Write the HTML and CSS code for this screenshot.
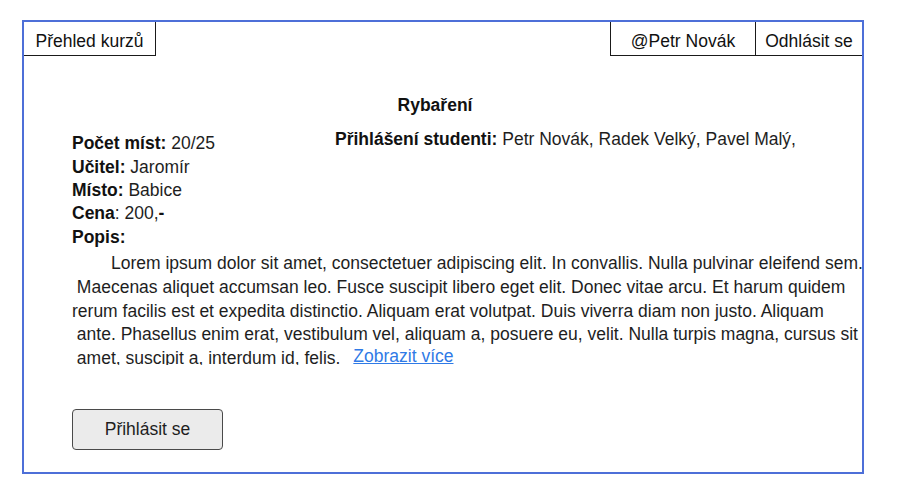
FILE: index.html
```html
<!DOCTYPE html>
<html lang="cs">
<head>
<meta charset="utf-8">
<title>Rybaření</title>
<link rel="stylesheet" href="styles.css">
</head>
<body>
<div class="frame">
  <div class="topbar">
    <div class="tab tab-courses">Přehled kurzů</div>
    <div class="tabs-right">
      <div class="tab tab-user">@Petr Novák</div>
      <div class="tab tab-logout">Odhlásit se</div>
    </div>
  </div>
  <div class="content">
    <h1 class="title">Rybaření</h1>
    <div class="details">
      <div class="info">
        <div class="line"><b>Počet míst:</b> 20/25</div>
        <div class="line"><b>Učitel:</b> Jaromír</div>
        <div class="line"><b>Místo:</b> Babice</div>
        <div class="line"><b>Cena</b>: 200,<b>-</b></div>
        <div class="line"><b>Popis:</b></div>
      </div>
      <div class="students"><b>Přihlášení studenti:</b> Petr Novák, Radek Velký, Pavel Malý,</div>
    </div>
    <p class="desc">Lorem ipsum dolor sit amet, consectetuer adipiscing elit. In convallis. Nulla pulvinar eleifend sem.<br>&nbsp;Maecenas aliquet accumsan leo. Fusce suscipit libero eget elit. Donec vitae arcu. Et harum quidem<br>rerum facilis est et expedita distinctio. Aliquam erat volutpat. Duis viverra diam non justo. Aliquam<br>&nbsp;ante. Phasellus enim erat, vestibulum vel, aliquam a, posuere eu, velit. Nulla turpis magna, cursus sit<br>&nbsp;amet, suscipit a, interdum id, felis. <a class="more" href="#">Zobrazit více</a></p>
    <button class="btn" type="button">Přihlásit se</button>
  </div>
</div>
</body>
</html>
```
FILE: styles.css
```css
html, body {
  margin: 0;
  padding: 0;
  background: #ffffff;
}
body {
  font-family: "Liberation Sans", Arial, sans-serif;
  font-size: 17.5px;
  color: #1e1e1e;
}
.frame {
  box-sizing: border-box;
  margin: 20px 0 0 22px;
  width: 842px;
  height: 454px;
  border: 2px solid #4d6fd8;
}
.topbar {
  display: flex;
  justify-content: space-between;
  align-items: flex-start;
}
.tabs-right {
  display: flex;
}
.tab {
  box-sizing: border-box;
  height: 34px;
  padding-top: 9px;
  line-height: 20px;
  text-align: center;
  border-bottom: 1px solid #1a1a1a;
  color: #111;
}
.tab-courses {
  width: 132px;
  border-right: 1px solid #1a1a1a;
}
.tab-user {
  width: 145px;
  border-left: 1px solid #1a1a1a;
}
.tab-logout {
  width: 107px;
  border-left: 1px solid #1a1a1a;
}
.content {
  padding: 38px 0 0 48px;
}
.title {
  margin: 0 16px 0 -48px;
  font-size: 17.5px;
  font-weight: bold;
  line-height: 23.4px;
  text-align: center;
  color: #111;
}
.details {
  display: flex;
  align-items: flex-start;
  margin-top: 11px;
}
.info {
  width: 263px;
  padding-top: 4px;
}
.line {
  line-height: 23.35px;
  white-space: nowrap;
}
.info b, .students b {
  color: #111;
}
.students {
  line-height: 23.4px;
  white-space: nowrap;
}
.desc {
  margin: 3px 0 0 0;
  line-height: 23.75px;
  max-height: 113px;
  overflow: hidden;
  text-indent: 39px;
  white-space: nowrap;
}
.more {
  color: #2f7ae6;
  text-decoration: underline;
  margin-left: 8px;
  line-height: 0;
  vertical-align: 2px;
}
.btn {
  display: block;
  box-sizing: border-box;
  margin-top: 44px;
  width: 151px;
  height: 41px;
  padding: 0;
  font-family: inherit;
  font-size: 17.5px;
  color: #1e1e1e;
  background: #ebebeb;
  border: 1px solid #4a4a4a;
  border-radius: 4px;
}
```
